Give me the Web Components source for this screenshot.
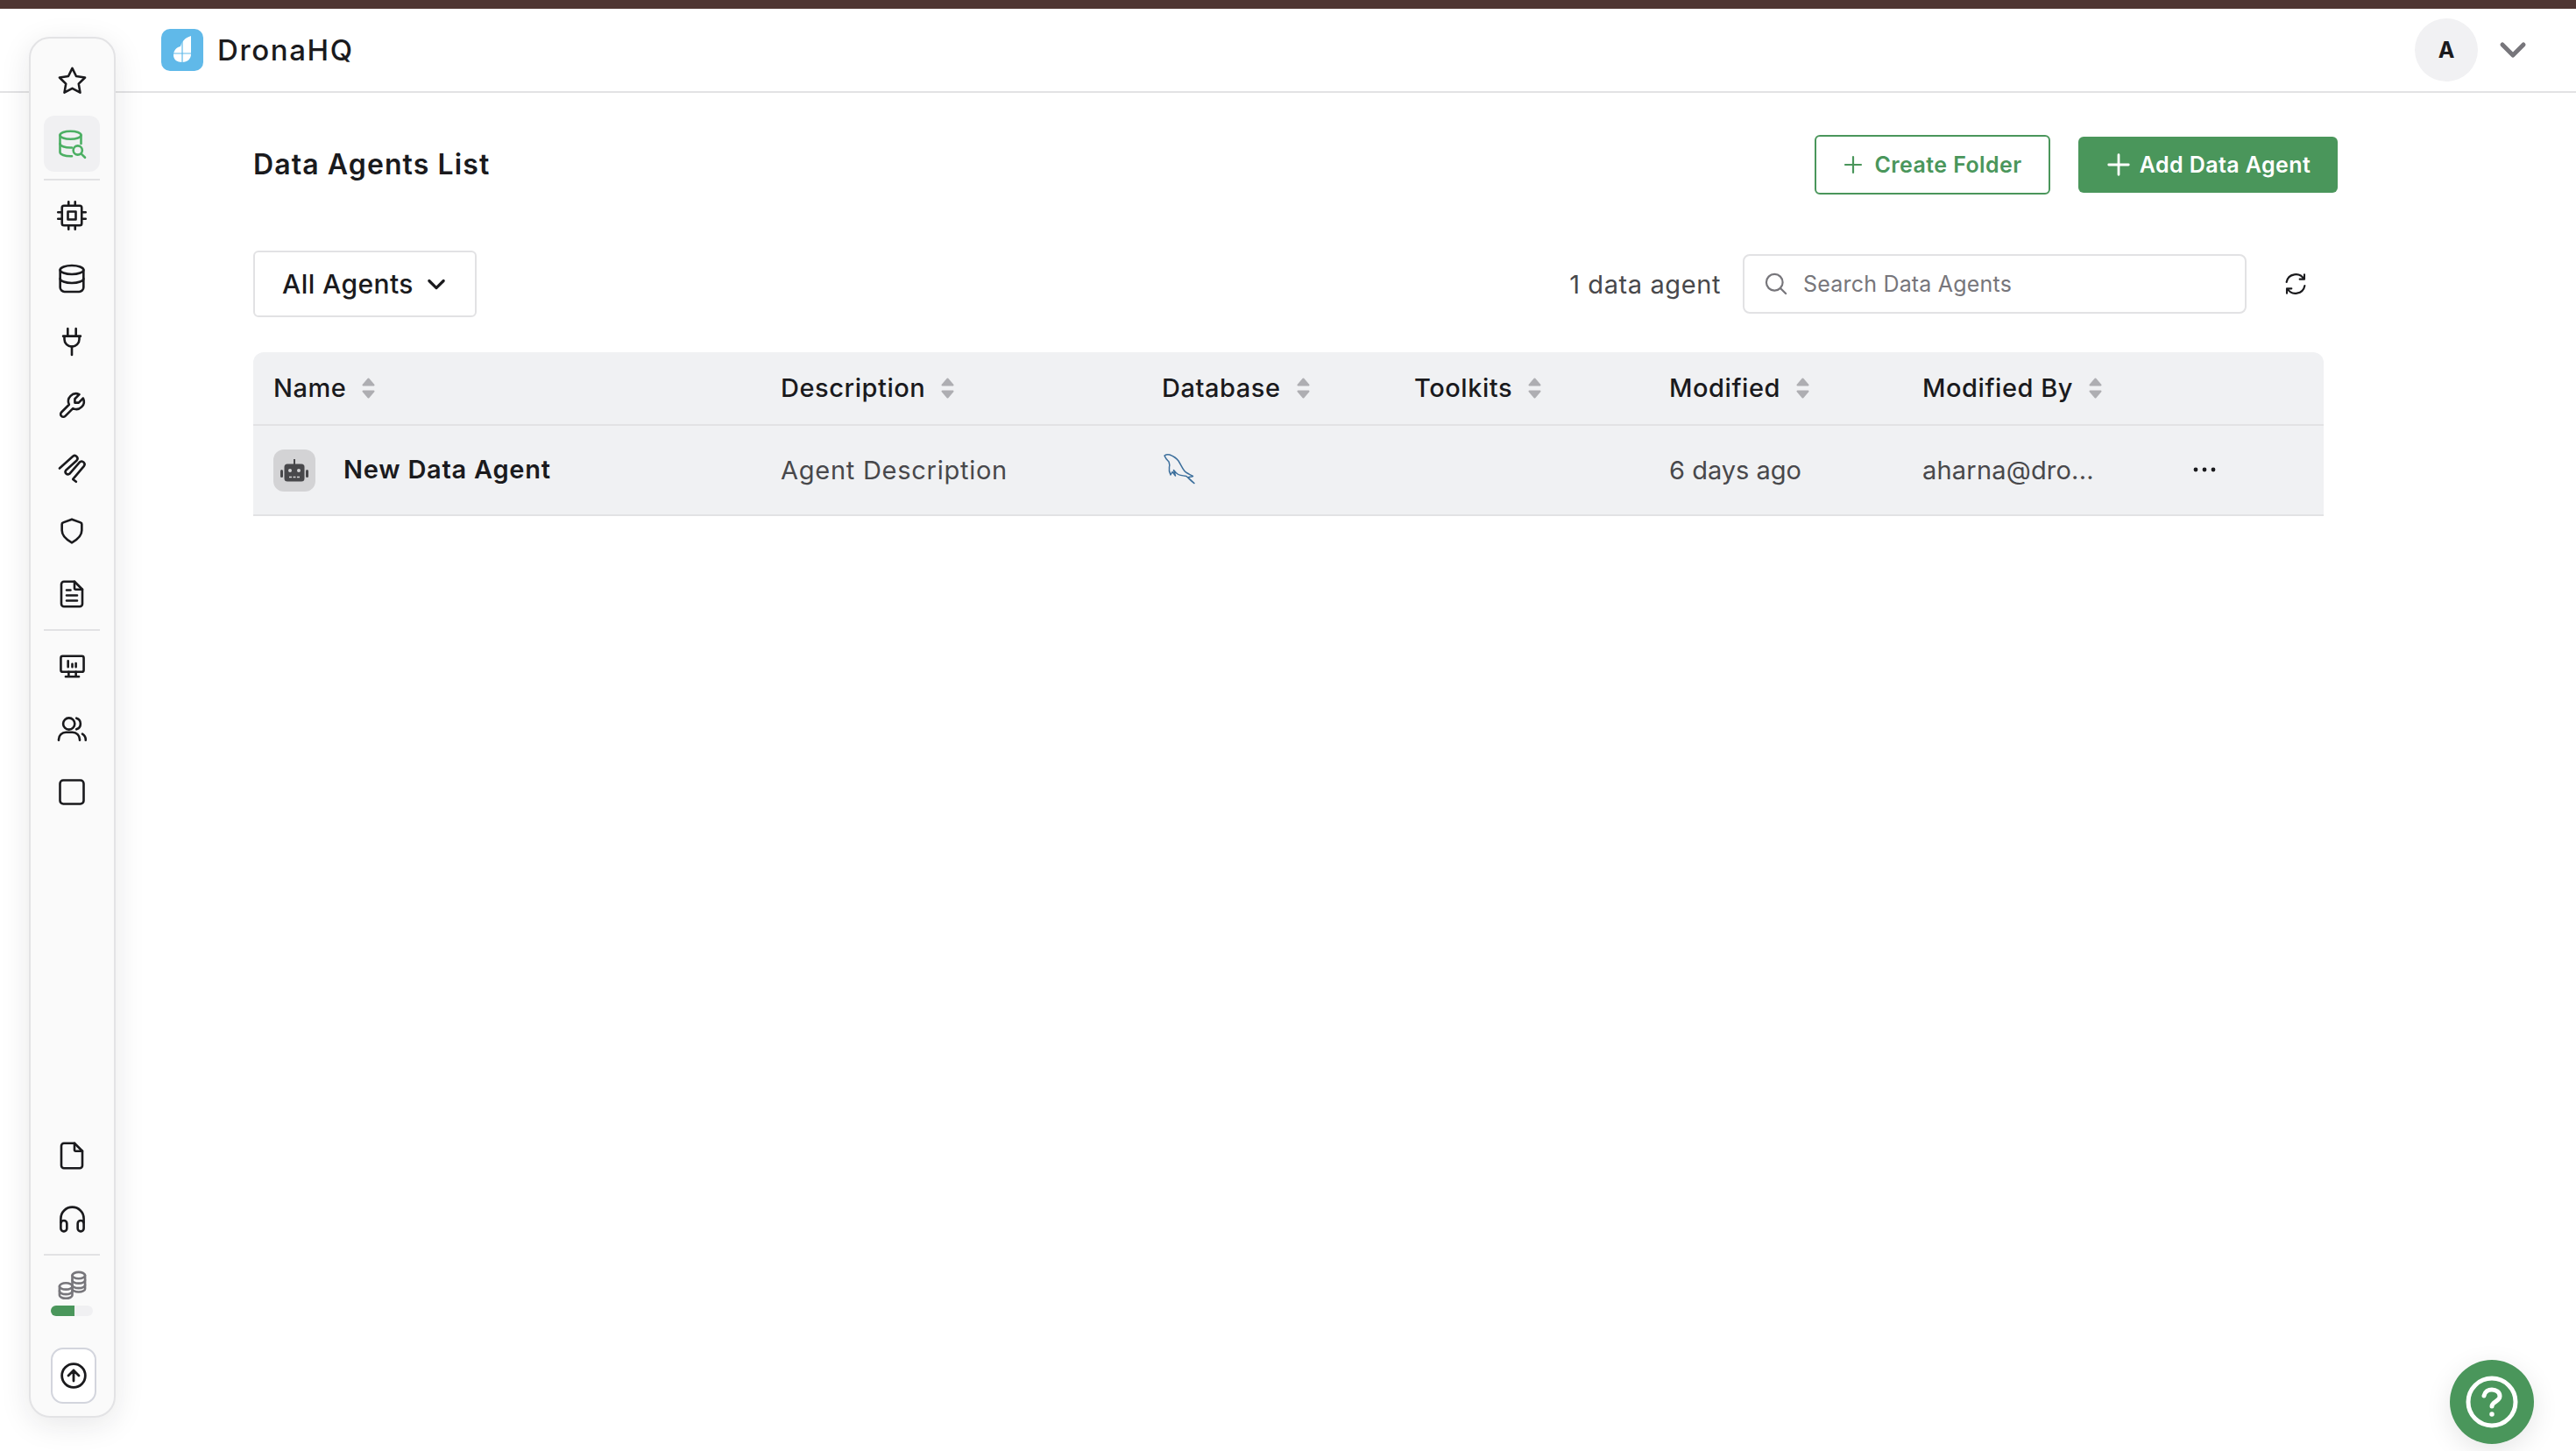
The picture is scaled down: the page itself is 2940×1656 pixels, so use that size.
<!DOCTYPE html>
<html lang="en">
<head>
<meta charset="utf-8">
<title>Data Agents List</title>
<style>
  html, body { margin: 0; padding: 0; background: #fff; }
  body { font-family: Inter, "Liberation Sans", sans-serif; color: #1a1a1d; }
</style>
</head>
<body>
<app-shell>
  <side-rail slot="rail"></side-rail>
  <top-bar slot="main"></top-bar>
  <page-head slot="main"></page-head>
  <list-tools slot="main"></list-tools>
  <agents-table slot="main"></agents-table>
</app-shell>
<help-fab></help-fab>

<script>
const ICONS = {
  star: '<path d="M12 17.75l-6.172 3.245l1.179 -6.873l-5 -4.867l6.9 -1l3.086 -6.253l3.086 6.253l6.9 1l-5 4.867l1.179 6.873z"/>',
  dbsearch: '<path d="M3 5.500c0 1.700 3.600 3 8 3s8 -1.300 8 -3s-3.600 -3 -8 -3s-8 1.300 -8 3"/><path d="M3 5.500v13c0 1.700 3.600 3 8 3h1"/><path d="M19 5.500v6.500"/><path d="M3 12c0 1.700 3.600 3 8 3h1"/><circle cx="16.500" cy="17" r="3.400"/><path d="M19 19.600l3 2.900"/>',
  cpu: '<rect x="4.500" y="4.500" width="15" height="15" rx="1.500"/><path d="M9 9h6v6h-6z"/><path d="M1.500 9.500h3M1.500 14.500h3M9.500 1.500v3M14.500 1.500v3M22.500 9.500h-3M22.500 14.500h-3M14.500 22.500v-3M9.500 22.500v-3"/>',
  db: '<path d="M4 6a8 3 0 1 0 16 0a8 3 0 1 0 -16 0"/><path d="M4 6v12c0 1.700 1.500 3 3 3h10c1.500 0 3 -1.300 3 -3v-12"/><path d="M4 12a8 3 0 0 0 16 0"/>',
  plug: '<path d="M8.700 1.500v6M15.300 1.500v6"/><path d="M5 7.500h14M6 7.500v2.500a6 6 0 0 0 12 0v-2.500"/><path d="M12 16v6.500"/>',
  tool: '<g transform="matrix(-1 0 0 1 24 0)"><path d="M7 10h3v-3l-3.500 -3.500a6 6 0 0 1 8 8l6 6a2 2 0 0 1 -3 3l-6 -6a6 6 0 0 1 -8 -8l3.500 3.500"/></g>',
  coil: '<path d="M2 12L12.500 2.600a2.200 2.200 0 0 1 3 3.200L7 13.500a2 2 0 0 0 2.800 2.800L18 7a2.300 2.300 0 0 1 3.200 3.200L12.500 20.500l2.500 2"/>',
  shield: '<path d="M12 2l7.500 2.800c.600 .200 1 .700 1 1.300v5.400c0 4.500 -3.500 7.800 -8.500 10.500c-5 -2.700 -8.500 -6 -8.500 -10.500v-5.400c0 -.600 .400 -1.100 1 -1.300z"/>',
  doc: '<path d="M14 2.500v5a1 1 0 0 0 1 1h5"/><path d="M18 21.500h-12a2 2 0 0 1 -2 -2v-15a2 2 0 0 1 2 -2h8l6 6v11a2 2 0 0 1 -2 2z"/><path d="M8 9h3M8 13h8M8 17h8"/>',
  monitor: '<rect x="2.500" y="3.500" width="19" height="13" rx="1.500"/><path d="M6.500 20.500h11M9 16.500v4M15 16.500v4"/><path d="M8.500 7.500v5M12 10v2.500M15 9.500v3"/>',
  users: '<circle cx="9.800" cy="8" r="4.400"/><path d="M2 20.500v-.5a5.500 5.500 0 0 1 5.500 -5.500h5a5.500 5.500 0 0 1 5.500 5.500v.5"/><path d="M15.500 3.800a4.400 4.400 0 0 1 0 8.400"/><path d="M22.500 20.500v-.5a5 5 0 0 0 -2.500 -4.300"/>',
  square: '<rect x="3" y="3" width="18" height="18" rx="2.500"/>',
  file: '<path d="M14 2.500v5a1 1 0 0 0 1 1h5"/><path d="M18 21.500h-12a2 2 0 0 1 -2 -2v-15a2 2 0 0 1 2 -2h8l6 6v11a2 2 0 0 1 -2 2z"/>',
  headset: '<path d="M3.500 14.500v-3a8.500 8.500 0 0 1 17 0v3"/><rect x="3.500" y="13" width="4.500" height="8" rx="2.200"/><rect x="16" y="13" width="4.500" height="8" rx="2.200"/>',
  coins: '<g stroke="#77767b"><ellipse cx="17" cy="4.500" rx="5" ry="2.500"/><path d="M12 4.500v10.500c0 1.400 2.200 2.500 5 2.500s5 -1.100 5 -2.500v-10.500"/><path d="M12 8.200c0 1.400 2.200 2.500 5 2.500s5 -1.100 5 -2.500M12 12c0 1.400 2.200 2.500 5 2.500s5 -1.100 5 -2.500"/><ellipse cx="7" cy="13" rx="5" ry="2.500" fill="#fafafa"/><path d="M2 13v7c0 1.400 2.200 2.500 5 2.500s5 -1.100 5 -2.500v-7"/><path d="M2 16.800c0 1.400 2.200 2.500 5 2.500s5 -1.100 5 -2.500"/></g>',
  upload: '<circle cx="12" cy="12" r="10"/><path d="M12 7.500l-4.500 4.500M12 7.500v9M16.500 12l-4.500 -4.500"/>',
  search: '<circle cx="10.500" cy="10.500" r="8"/><path d="M16.500 16.500l5 5"/>',
  refresh: '<g transform="matrix(-1 0 0 1 24 0)"><path d="M19.800 10.500a8.100 8.100 0 0 0 -15 -2.500m-.300 -4v4h4"/><path d="M4.200 13.500a8.100 8.100 0 0 0 15 2.500m.300 4v-4h-4"/></g>',
  plus: '<path d="M12 3v18M3 12h18"/>',
  chevron: '<path d="M5 9l7 7l7 -7"/>'
};

// px is the stroke as drawn on the page, whatever the icon's size
function svgIcon(name, size, px, color) {
  const stroke = (px * 24 / size).toFixed(2);
  return `<svg xmlns="http://www.w3.org/2000/svg" width="${size}" height="${size}" viewBox="0 0 24 24" fill="none" stroke="${color || 'currentColor'}" stroke-width="${stroke}" stroke-linecap="round" stroke-linejoin="round">${ICONS[name]}</svg>`;
}

class AppShell extends HTMLElement {
  constructor() {
    super();
    this.attachShadow({ mode: 'open' });
    this.shadowRoot.innerHTML = `
      <style>
        :host { display: block; height: 1656px; overflow: hidden; }
        .stripe { height: 10px; background: #4f3633; }
        .stage { display: grid; height: 1646px; }
        .content, .rail { grid-area: 1 / 1; min-width: 0; }
        .rail { justify-self: start; display: flex; margin: 32px 0 38px 33px; position: relative; z-index: 2; }
      </style>
      <div class="stripe"></div>
      <div class="stage">
        <div class="content"><slot name="main"></slot></div>
        <div class="rail"><slot name="rail"></slot></div>
      </div>
    `;
  }
}

class SideRail extends HTMLElement {
  constructor() {
    super();
    this.attachShadow({ mode: 'open' });
    const item = (name, size, active) => `<div class="item ${active ? 'active' : ''}">${svgIcon(name, size, 2.6, active ? '#4caf63' : '#1a1a1d')}</div>`;
    this.shadowRoot.innerHTML = `
      <style>
        :host { display: flex; box-sizing: border-box; width: 99px; background: #fafafa; border: 2px solid #e3e3e5; border-radius: 24px; box-shadow: 0 8px 34px rgba(30, 30, 40, .10); }
        .col { flex: 1; display: flex; flex-direction: column; justify-content: space-between; align-items: center; padding: 16px 1px 14px 0; }
        .group { display: flex; flex-direction: column; align-items: center; gap: 8px; }
        .item { width: 64px; height: 64px; display: flex; align-items: center; justify-content: center; border-radius: 12px; }
        .item.active { background: #f0f0f2; }
        .sep { width: 64px; height: 2px; background: #e2e2e4; }
        .coins { display: flex; margin: 8px 0 -2px; }
        .meter { width: 48px; height: 12px; border-radius: 6px; background: #f0f0f2; overflow: hidden; }
        .meter i { display: block; width: 56%; height: 100%; background: #4a965b; }
        .upload { box-sizing: border-box; width: 52px; height: 64px; margin: 28px 0 0 3px; display: flex; align-items: center; justify-content: center; background: #fff; border: 2px solid #d3d5dd; border-radius: 14px; }
      </style>
      <div class="col">
        <div class="group">
          ${item('star', 35)}${item('dbsearch', 36, true)}
          <div class="sep"></div>
          ${item('cpu', 36)}${item('db', 40)}${item('plug', 34)}${item('tool', 35)}${item('coil', 35)}${item('shield', 32)}${item('doc', 36)}
          <div class="sep"></div>
          ${item('monitor', 33)}${item('users', 36)}${item('square', 36)}
        </div>
        <div class="group">
          ${item('file', 36)}${item('headset', 37)}
          <div class="sep"></div>
          <div class="coins">${svgIcon('coins', 35, 2.6)}</div>
          <div class="meter"><i></i></div>
          <div class="upload">${svgIcon('upload', 32, 2.8, '#1a1a1d')}</div>
        </div>
      </div>
    `;
  }
}

class TopBar extends HTMLElement {
  constructor() {
    super();
    this.attachShadow({ mode: 'open' });
    this.shadowRoot.innerHTML = `
      <style>
        :host { display: flex; align-items: center; justify-content: space-between; box-sizing: border-box; height: 96px; padding: 0 56px 0 184px; border-bottom: 2px solid #e2e2e4; }
        .brand { display: flex; align-items: center; gap: 16px; font-size: 33px; font-weight: 500; letter-spacing: 1.6px; }
        .brand svg { display: block; }
        .user { display: flex; align-items: center; gap: 24px; }
        .avatar { width: 72px; height: 72px; border-radius: 50%; background: #f1f1f3; display: flex; align-items: center; justify-content: center; font-size: 25px; font-weight: 700; }
        .user svg { display: block; }
      </style>
      <div class="brand">
        <svg width="48" height="48" viewBox="0 0 48 48">
          <rect width="48" height="48" rx="10" fill="#60b9e9"/>
          <path d="M34 8C27 10 23 15 22 20C17 21 14 25 14 30C14 35 18 38 24 38C30 38 34 34 34 29Z" fill="#fff"/>
          <path d="M24 14V38M14 28H34" stroke="#60b9e9" stroke-width="1.200" fill="none"/>
        </svg>
        <span>DronaHQ</span>
      </div>
      <div class="user">
        <div class="avatar">A</div>
        <svg width="32" height="20" viewBox="0 0 32 20" fill="none" stroke="#77767b" stroke-width="5" stroke-linecap="round" stroke-linejoin="round"><path d="M4 4l12 12l12 -12"/></svg>
      </div>
    `;
  }
}

class PageHead extends HTMLElement {
  constructor() {
    super();
    this.attachShadow({ mode: 'open' });
    this.shadowRoot.innerHTML = `
      <style>
        :host { display: flex; align-items: center; justify-content: space-between; margin: 48px 272px 0 289px; height: 68px; }
        h1 { margin: 0 0 2px; font-size: 32px; font-weight: 600; letter-spacing: 1.1px; }
        .actions { display: flex; align-items: center; gap: 32px; }
        button { box-sizing: border-box; display: flex; align-items: center; justify-content: center; font: inherit; font-size: 25px; font-weight: 600; letter-spacing: .4px; border-radius: 6px; }
        .ghost { width: 269px; height: 68px; gap: 12px; color: #4a965b; background: #fff; border: 2px solid #4a965b; }
        .solid { width: 296px; height: 64px; gap: 9px; color: #fff; background: #4a965b; border: 0; }
      </style>
      <h1>Data Agents List</h1>
      <div class="actions">
        <button class="ghost">${svgIcon('plus', 24, 2.2)}Create Folder</button>
        <button class="solid">${svgIcon('plus', 30, 2.8)}Add Data Agent</button>
      </div>
    `;
  }
}

class ListTools extends HTMLElement {
  constructor() {
    super();
    this.attachShadow({ mode: 'open' });
    this.shadowRoot.innerHTML = `
      <style>
        :host { display: flex; align-items: center; justify-content: space-between; margin: 64px 288px 0 289px; height: 76px; }
        .filter { box-sizing: border-box; width: 255px; height: 76px; display: flex; align-items: center; gap: 12px; padding-left: 31px; border: 2px solid #e2e2e4; border-radius: 6px; font-size: 30px; font-weight: 500; letter-spacing: .4px; }
        .right { display: flex; align-items: center; padding-right: 16px; }
        .count { font-size: 29px; color: #48484b; letter-spacing: .6px; margin-right: 25px; }
        .search { box-sizing: border-box; width: 575px; height: 68px; display: flex; align-items: center; gap: 17px; padding-left: 22px; border: 2px solid #e2e2e4; border-radius: 8px; color: #77767b; font-size: 25px; letter-spacing: .2px; margin-right: 40px; }
        svg { display: block; }
      </style>
      <div class="filter"><span>All Agents</span>${svgIcon('chevron', 28, 3.2)}</div>
      <div class="right">
        <span class="count">1 data agent</span>
        <div class="search">${svgIcon('search', 28, 2.2)}<span>Search Data Agents</span></div>
        ${svgIcon('refresh', 32, 2.1, '#1a1a1d')}
      </div>
    `;
  }
}

class AgentsTable extends HTMLElement {
  constructor() {
    super();
    this.attachShadow({ mode: 'open' });
    const sort = `<svg class="sort" width="15" height="24" viewBox="0 0 15 24" fill="#aeaeb2" stroke="#aeaeb2" stroke-width="2" stroke-linejoin="round"><path d="M7.500 1.500L13.500 8.500H1.500z"/><path d="M1.500 15.500H13.500L7.500 22.500z"/></svg>`;
    const heads = ['Name', 'Description', 'Database', 'Toolkits', 'Modified', 'Modified By'];
    this.shadowRoot.innerHTML = `
      <style>
        :host { display: block; margin: 40px 288px 0 289px; background: #f0f1f3; border-radius: 12px 12px 0 0; }
        .row { display: grid; grid-template-columns: 579px 435px 288px 291px 289px 289px 1fr; align-items: center; }
        .head { height: 82px; border-bottom: 2px solid #e2e2e4; }
        .body { height: 101px; border-bottom: 2px solid #e2e2e4; }
        .cell { display: flex; align-items: center; padding-left: 23px; min-width: 0; }
        .head .cell { gap: 18px; font-size: 29px; font-weight: 500; letter-spacing: .55px; padding-bottom: 2px; }
        .head .sort { margin-top: 2px; }
        .body .cell { font-size: 29px; color: #48484b; letter-spacing: .74px; }
        .body .cell.name { gap: 32px; color: #1a1a1d; font-weight: 600; letter-spacing: .75px; }
        .body .cell.name > span:last-child { margin-bottom: 2px; }
        .body .cell.age { letter-spacing: 0; }
        .body .cell.by { letter-spacing: .2px; }
        .body .cell.dots { padding-left: 42px; padding-bottom: 2px; }
        .bot { display: flex; width: 48px; height: 48px; flex: none; border-radius: 12px; background: #d3d3d5; }
        svg { display: block; flex: none; }
      </style>
      <div class="row head">
        ${heads.map(h => `<div class="cell"><span>${h}</span>${sort}</div>`).join('')}
      </div>
      <div class="row body">
        <div class="cell name">
          <span class="bot">
            <svg width="48" height="48" viewBox="0 0 48 48" fill="#48484b">
              <rect x="23" y="11" width="2" height="7"/>
              <rect x="12.500" y="16.500" width="23" height="20" rx="3.500"/>
              <rect x="8" y="23" width="3" height="9" rx="1.500"/>
              <rect x="37" y="23" width="3" height="9" rx="1.500"/>
              <circle cx="19" cy="24" r="2" fill="#d3d3d5"/>
              <circle cx="29" cy="24" r="2" fill="#d3d3d5"/>
              <path d="M18 31.500h12" stroke="#d3d3d5" stroke-width="1.500" stroke-dasharray="3 1.500"/>
            </svg>
          </span>
          <span>New Data Agent</span>
        </div>
        <div class="cell">Agent Description</div>
        <div class="cell">
          <svg width="40" height="40" viewBox="0 0 40 40" fill="none" stroke="#3c6f9c" stroke-width="1.500" stroke-linejoin="round" stroke-linecap="round">
            <path d="M3 3C5 1.500 7 1.500 9 2C13 3.500 16 5 19 9C21.500 13 23 17 25.500 20C27 22.500 30 23.500 35.500 26.500C33 27.500 31.500 27 30 28L37 34.500C33 32 30.500 28.500 28 26.500C24 26 20 25.500 18 24C15 22 14 20 13.500 19.500L15.500 26L12 21.500L10 25C8.500 22 8 19 8.500 16C9.500 14 8.500 12 8 10C6 8 4 6 3 3Z"/>
          </svg>
        </div>
        <div class="cell"></div>
        <div class="cell age">6 days ago</div>
        <div class="cell by">aharna@dro...</div>
        <div class="cell dots">
          <svg width="28" height="8" viewBox="0 0 28 8" fill="#1a1a1d"><circle cx="4" cy="4" r="2.400"/><circle cx="14" cy="4" r="2.400"/><circle cx="24" cy="4" r="2.400"/></svg>
        </div>
      </div>
    `;
  }
}

class HelpFab extends HTMLElement {
  constructor() {
    super();
    this.attachShadow({ mode: 'open' });
    this.shadowRoot.innerHTML = `
      <style>
        :host { position: fixed; left: 2796px; top: 1552px; width: 96px; height: 96px; z-index: 5; border-radius: 50%; background: #4a965b; box-shadow: 0 8px 30px rgba(0, 0, 0, .10); display: flex; align-items: center; justify-content: center; }
      </style>
      <svg width="60" height="60" viewBox="0 0 60 60" fill="none" stroke="#fff" stroke-width="5" stroke-linecap="round" stroke-linejoin="round">
        <circle cx="30" cy="30" r="27"/>
        <path d="M21 23c1 -5 5 -7 9 -7c5 0 9 3 9 7.500c0 6 -9 6 -9 11.500" />
        <circle cx="30" cy="44" r="1.500" fill="#fff" stroke-width="2.500"/>
      </svg>
    `;
  }
}

customElements.define('app-shell', AppShell);
customElements.define('side-rail', SideRail);
customElements.define('top-bar', TopBar);
customElements.define('page-head', PageHead);
customElements.define('list-tools', ListTools);
customElements.define('agents-table', AgentsTable);
customElements.define('help-fab', HelpFab);
</script>
</body>
</html>
